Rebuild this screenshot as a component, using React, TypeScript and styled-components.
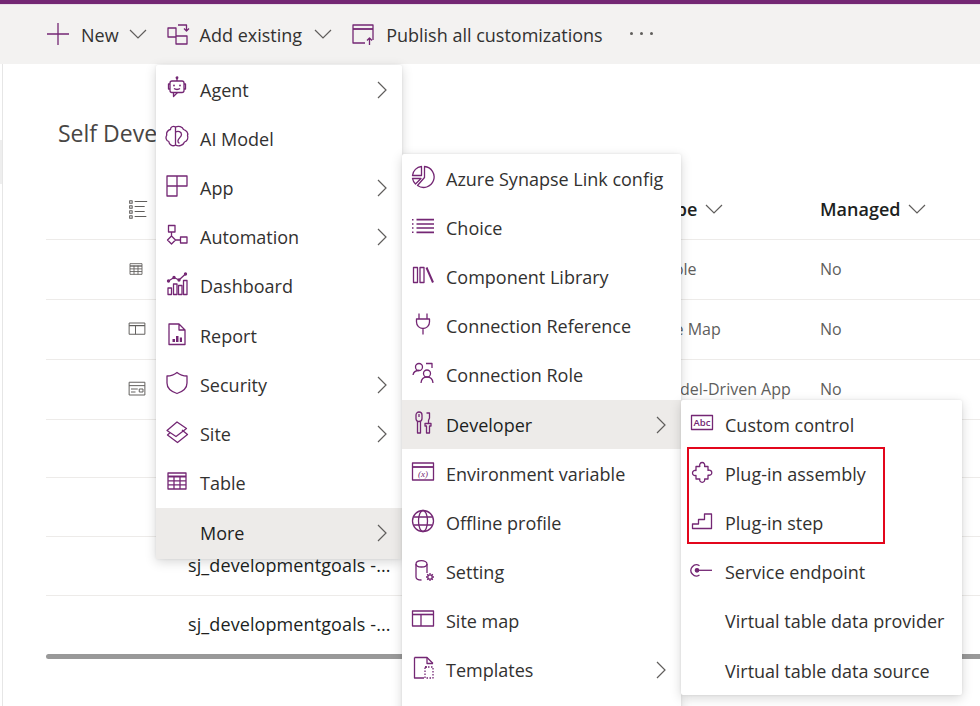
import React from 'react';
import styled, { createGlobalStyle } from 'styled-components';

const PURPLE = '#742774';
const FONT = '"Open Sans", "Noto Sans", "Liberation Sans", sans-serif';

const GlobalStyle = createGlobalStyle`
  html, body {
    margin: 0;
    padding: 0;
    background: #fff;
    font-family: ${FONT};
  }
`;

const Page = styled.div`
  position: relative;
  width: 980px;
  height: 706px;
  overflow: hidden;
  background: #fff;
`;

const TopBar = styled.div`
  height: 4px;
  background: ${PURPLE};
  border-bottom: 1px solid #e8dfe8;
`;

const CommandBar = styled.div`
  display: flex;
  align-items: center;
  height: 59px;
  padding-left: 46px;
  background: #f3f2f1;
  color: #323130;
  font-size: 18px;
`;

const CommandIcon = styled.span<{ $after: number }>`
  display: flex;
  margin-right: ${(p) => p.$after}px;
  margin-top: -1px;
`;

const CommandText = styled.span<{ $after: number }>`
  margin-right: ${(p) => p.$after}px;
  white-space: nowrap;
`;

const Dots = styled.span`
  display: flex;
  gap: 7px;
  margin-left: 27px;
  margin-top: -2px;
`;

const Dot = styled.i`
  width: 3px;
  height: 3px;
  border-radius: 50%;
  background: #605e5c;
`;

const Content = styled.main`
  margin-left: 2px;
  height: 642px;
  border-left: 1px solid #e6e6e6;
  padding-left: 43px;
`;

const SideTick = styled.div`
  position: absolute;
  left: 0;
  top: 140px;
  width: 2px;
  height: 44px;
  background: #eeeeee;
`;

const Title = styled.h1`
  margin: 0;
  height: 117px;
  padding-left: 12px;
  padding-top: 52px;
  box-sizing: border-box;
  font-size: 23px;
  line-height: 34px;
  font-weight: 400;
  color: #484644;
  white-space: nowrap;
`;

const Table = styled.div`
  display: flex;
  flex-direction: column;
`;

const Row = styled.div<{ $height: number }>`
  display: grid;
  grid-template-columns: 142px 468px 164px 1fr;
  align-items: center;
  height: ${(p) => p.$height}px;
  padding-bottom: 2px;
  box-sizing: border-box;
  border-bottom: 1px solid #edebe9;
  color: #605e5c;
  font-size: 16px;
`;

const LastRow = styled(Row)`
  border-bottom: none;
`;

const RowIcon = styled.span`
  display: flex;
  padding-left: 82px;
`;

const HeaderCell = styled.span`
  display: flex;
  align-items: center;
  gap: 8px;
  font-size: 18px;
  font-weight: 600;
  color: #201f1e;
`;

const NameCell = styled.span`
  font-size: 18px;
  letter-spacing: 0.1px;
  color: #201f1e;
  white-space: nowrap;
`;

const Scrollbar = styled.div`
  height: 5px;
  background: #999;
  border-radius: 3px 0 0 3px;
`;

const Menu = styled.div<{ $left: number; $top: number; $width: number }>`
  position: absolute;
  left: ${(p) => p.$left}px;
  top: ${(p) => p.$top}px;
  width: ${(p) => p.$width}px;
  background: #fff;
  border-radius: 2px;
  box-shadow: 0 3px 12px rgba(0, 0, 0, 0.16), 0 0 3px rgba(0, 0, 0, 0.08);
`;

const MenuRow = styled.div<{ $active?: boolean; $tall?: boolean }>`
  display: flex;
  align-items: center;
  height: ${(p) => (p.$tall ? 51 : 49.2)}px;
  padding-right: 15px;
  background: ${(p) => (p.$active ? '#edebe9' : 'transparent')};
  color: ${(p) => (p.$active ? '#201f1e' : '#323130')};
  font-size: 18px;
  white-space: nowrap;
`;

const MenuIcon = styled.span`
  display: flex;
  flex: none;
  justify-content: center;
  width: 42px;
  margin-right: 2px;
  margin-top: -4px;
`;

const MenuLabel = styled.span`
  flex: 1;
`;

const RedBox = styled.div`
  position: absolute;
  left: 687px;
  top: 447px;
  width: 198px;
  height: 97px;
  box-sizing: border-box;
  border: 2px solid #e3061c;
  pointer-events: none;
`;

type IconProps = { children: React.ReactNode; color?: string; size?: number };

const Icon = ({ children, color = PURPLE, size = 24 }: IconProps) => (
  <svg
    width={size}
    height={size}
    viewBox="0 0 24 24"
    fill="none"
    stroke={color}
    strokeWidth={1.3}
    strokeLinejoin="round"
  >
    {children}
  </svg>
);

const Chevron = () => (
  <svg width="10" height="18" viewBox="0 0 10 18" fill="none" stroke="#605e5c" strokeWidth="1.2">
    <path d="M1 1l8 8-8 8" />
  </svg>
);

const Caret = ({ color = '#605e5c' }: { color?: string }) => (
  <svg width="18" height="10" viewBox="0 0 18 10" fill="none" stroke={color} strokeWidth="1.2">
    <path d="M1 1l8 8 8-8" />
  </svg>
);

const icons: Record<string, React.ReactNode> = {
  agent: (
    <>
      <rect x="5" y="5" width="14" height="11.5" rx="2" />
      <path d="M12 2v3M5 8H3.5v5H5M19 8h1.5v5H19M8.5 16.5v4l4-4" />
      <circle cx="12" cy="1.8" r="0.8" fill={PURPLE} />
      <circle cx="9" cy="9.5" r="0.9" fill={PURPLE} stroke="none" />
      <circle cx="15" cy="9.5" r="0.9" fill={PURPLE} stroke="none" />
      <path d="M9 12.5c1.5 1.3 4.5 1.3 6 0" />
    </>
  ),
  brain: (
    <>
      <path d="M10.5 2C8 .5 5.5 2 5.5 4.5 3 5 1 7.5 1.8 10 .3 12.500 1 15.500 3.800 16.500 4 19.500 7.500 22 10.500 20z" />
      <path d="M10.500 2c3-1.500 7-.5 8 2.500 3 1 5 3.500 4 6 1 2.500 0 5.500-3 6.500-1 3-5.500 5-9 3" />
      <path d="M10.500 7c2.500-1.500 6-.5 6 2.500 0 2.500-3 3.500-3.500 6-.2 1.500.5 2.500 1.500 2.500" />
    </>
  ),
  app: <path d="M2 2h20v10H12v10H2zM12 2v10M2 12h10" />,
  automation: (
    <>
      <rect x="3.500" y="2.500" width="6.500" height="6.500" />
      <path d="M6.500 9v4M6.500 13l4 4-4 4-4-4zM10.500 17h5" />
      <rect x="15.500" y="14" width="6.500" height="6" />
    </>
  ),
  dashboard: (
    <>
      <rect x="3" y="16" width="3.500" height="6.500" />
      <rect x="8.500" y="12" width="3.500" height="10.500" />
      <rect x="13.500" y="13.500" width="3.500" height="9" />
      <rect x="18.500" y="8.500" width="3.500" height="14" />
      <path d="M3.500 9l5.500-3.500 5 2.500 6.500-6" />
      <circle cx="3.500" cy="9" r="1" fill={PURPLE} />
      <circle cx="9" cy="5.500" r="1" fill={PURPLE} />
      <circle cx="14" cy="8" r="1" fill={PURPLE} />
      <circle cx="20.500" cy="2" r="1" fill={PURPLE} />
    </>
  ),
  report: (
    <>
      <path d="M4 2h10l6 6v14.500H4zM14 2v6h6" />
      <path d="M7.500 17h2.500v3H7.500zM11 14h2.500v6H11zM14.800 15.500h2.200v4.500h-2.200z" fill={PURPLE} stroke="none" />
    </>
  ),
  shield: <path d="M12 1.500C9 4 5.500 5 2 5v7c0 5 4 8.500 10 10.500 6-2 10-5.500 10-10.500V5c-3.500 0-7-1-10-3.500z" />,
  site: (
    <>
      <path d="M2 10.500l10-8.500 9.500 6.500-10.500 8z" />
      <path d="M5 12.800L2.500 15l10 7.500L22.500 14.500 17 10" />
    </>
  ),
  table: (
    <>
      <rect x="3" y="4" width="18" height="16" />
      <path d="M3 7.500h18" strokeWidth="2" />
      <path d="M3 11.800h18M3 15.800h18M9 7v13M15 7v13" />
    </>
  ),
  pie: (
    <>
      <path d="M13.500 1.500A10.500 10.500 0 1 1 6.500 20.500L13.500 12.500z" />
      <path d="M10.500 1.500A10 10 0 0 0 1.500 10.500H10.500z" />
      <path d="M1.500 13.500H10L4.500 19A10 10 0 0 1 1.500 13.500z" />
    </>
  ),
  list: (
    <>
      <path d="M5.500 5.700H23M5.500 10H23M5.500 14H23M5.500 18.300H23" strokeWidth="1.700" />
      <path d="M1 5.700h1.500M1 10h1.500M1 14h1.500M1 18.300h1.500" strokeWidth="1.500" />
    </>
  ),
  library: (
    <>
      <rect x="2.500" y="4.500" width="4" height="15" />
      <rect x="9" y="4.500" width="4" height="15" />
      <path d="M15.500 4.500l6.500 15" strokeWidth="2" />
    </>
  ),
  plug: <path d="M8 1.500v5.500M16 1.500v5.500M5.500 7h13v3a6.500 6.500 0 0 1-13 0zM12 16.500v6" />,
  people: (
    <>
      <circle cx="8" cy="6" r="3.500" />
      <path d="M2 14c.500-3 3-4.500 6-4.500" />
      <path d="M15 2.500h6v4.500" />
      <circle cx="16" cy="12.500" r="3.500" />
      <path d="M10 22c.300-3.500 2.500-6 6-6s5.700 2.500 6 6" />
    </>
  ),
  tools: (
    <>
      <path d="M5 4a3 3 0 0 1 6 0v3.500a3 3 0 0 1-6 0z" />
      <path d="M8 3v3M6.500 10.500V22h3V10.500" />
      <path d="M15.500 2h3v5l-1 2.500v3M14 12.500h6v2.500h-1.500v7h-3v-7H14z" />
    </>
  ),
  envvar: (
    <>
      <rect x="1.500" y="3" width="21" height="17" />
      <path d="M1.500 7h21" strokeWidth="1.800" />
      <text x="12" y="17" fontSize="9" fontStyle="italic" fontFamily="Liberation Serif, serif" textAnchor="middle" fill={PURPLE} stroke="none">(x)</text>
    </>
  ),
  globe: (
    <>
      <circle cx="12" cy="12" r="10.500" />
      <ellipse cx="12" cy="12" rx="4.500" ry="10.500" />
      <path d="M2.500 8h19M2.500 16h19" />
    </>
  ),
  setting: (
    <>
      <path d="M16 15V6c0-4.500-11-4.500-11 0v13c0 2 2.500 3 5.500 3" />
      <path d="M5 6c0 4 11 4 11 0" />
      <circle cx="19" cy="19" r="2.200" />
      <path d="M19 15v1.500M19 21.500V23M15 19h1.500M21.500 19H23M16.200 16.200l1 1M20.800 20.800l1 1M21.800 16.200l-1 1M17.200 20.800l-1 1" />
    </>
  ),
  sitemap: (
    <>
      <rect x="1.500" y="4" width="21" height="15" />
      <path d="M1.500 7.500h21" strokeWidth="1.600" />
      <path d="M10 7.500V19" />
    </>
  ),
  template: (
    <>
      <path d="M14 11H16M3.500 1.500H16l6 6M3.500 1.500v20.500h9.500" />
      <path d="M16 1.500v6h6" />
      <path d="M14 11h8v11h-8z" strokeDasharray="1.500 1.500" />
    </>
  ),
  abc: (
    <>
      <rect x="1.500" y="4.500" width="21" height="14" />
      <text x="12" y="15" fontSize="9.500" fontWeight="600" fontFamily="Open Sans, sans-serif" textAnchor="middle" fill={PURPLE} stroke="none">Abc</text>
    </>
  ),
  puzzle: (
    <path d="M6 6.500h3.800c-.6-2.600.7-4 2.400-4s3 1.400 2.400 4H18v3.900c2.300-.7 3.800.6 3.800 2.300s-1.500 3-3.800 2.400v3.900h-3.400c.5 2-.7 3.300-2.400 3.300s-2.900-1.300-2.400-3.300H6v-3.600c-2.200.6-3.500-.7-3.500-2.400s1.300-3 3.500-2.400z" />
  ),
  stairs: <path d="M2.500 19.500h19V5h-7v5.500h-6v4.500h-6z" />,
  endpoint: (
    <>
      <path d="M9.500 7.800A5.500 5.500 0 1 0 9.500 17" />
      <circle cx="7" cy="12.300" r="1.700" fill={PURPLE} />
      <path d="M8.500 12.300H22" />
    </>
  ),
};

type Item = { label: string; icon?: string; more?: boolean; active?: boolean; tall?: boolean };

const firstMenu: Item[] = [
  { label: 'Agent', icon: 'agent', more: true },
  { label: 'AI Model', icon: 'brain' },
  { label: 'App', icon: 'app', more: true },
  { label: 'Automation', icon: 'automation', more: true },
  { label: 'Dashboard', icon: 'dashboard' },
  { label: 'Report', icon: 'report' },
  { label: 'Security', icon: 'shield', more: true },
  { label: 'Site', icon: 'site', more: true },
  { label: 'Table', icon: 'table' },
  { label: 'More', more: true, active: true, tall: true },
];

const secondMenu: Item[] = [
  { label: 'Azure Synapse Link config', icon: 'pie' },
  { label: 'Choice', icon: 'list' },
  { label: 'Component Library', icon: 'library' },
  { label: 'Connection Reference', icon: 'plug' },
  { label: 'Connection Role', icon: 'people' },
  { label: 'Developer', icon: 'tools', more: true, active: true },
  { label: 'Environment variable', icon: 'envvar' },
  { label: 'Offline profile', icon: 'globe' },
  { label: 'Setting', icon: 'setting' },
  { label: 'Site map', icon: 'sitemap' },
  { label: 'Templates', icon: 'template', more: true },
  { label: '' },
];

const thirdMenu: Item[] = [
  { label: 'Custom control', icon: 'abc' },
  { label: 'Plug-in assembly', icon: 'puzzle' },
  { label: 'Plug-in step', icon: 'stairs' },
  { label: 'Service endpoint', icon: 'endpoint' },
  { label: 'Virtual table data provider' },
  { label: 'Virtual table data source' },
];

const FlyoutMenu = ({ items, left, top, width }: { items: Item[]; left: number; top: number; width: number }) => (
  <Menu $left={left} $top={top} $width={width}>
    {items.map((item) => (
      <MenuRow key={item.label} $active={item.active} $tall={item.tall}>
        <MenuIcon>{item.icon && <Icon>{icons[item.icon]}</Icon>}</MenuIcon>
        <MenuLabel>{item.label}</MenuLabel>
        {item.more && <Chevron />}
      </MenuRow>
    ))}
  </Menu>
);

const GREY = '#605e5c';

export default function App() {
  return (
    <Page>
      <GlobalStyle />
      <TopBar />
      <CommandBar>
        <CommandIcon $after={11}>
          <Icon>
            <path d="M12 1v22M1 12h22" />
          </Icon>
        </CommandIcon>
        <CommandText $after={10}>New</CommandText>
        <CommandIcon $after={19}>
          <Caret />
        </CommandIcon>
        <CommandIcon $after={10}>
          <Icon>
            <path d="M10 6H2v9h8zM10 14h11v8H10zM12 3h8.500v6M18 6.500l2.500 2.500 2.500-2.500" />
          </Icon>
        </CommandIcon>
        <CommandText $after={12}>Add existing</CommandText>
        <CommandIcon $after={19}>
          <Caret />
        </CommandIcon>
        <CommandIcon $after={11}>
          <Icon>
            <path d="M14 21H2V3h20v15" />
            <path d="M2 7h20" strokeWidth="1.800" />
            <path d="M18.500 23v-7M16 18.500l2.500-2.500 2.500 2.500" />
          </Icon>
        </CommandIcon>
        <CommandText $after={0}>Publish all customizations</CommandText>
        <Dots>
          <Dot />
          <Dot />
          <Dot />
        </Dots>
      </CommandBar>
      <SideTick />
      <Content>
        <Title>Self Deve</Title>
        <Table>
          <Row $height={59}>
            <RowIcon>
              <Icon color={GREY} size={20}>
                <path d="M8 3h15M8 9h12M8 15h12M8 21h14M2 2h3v3H2zM2 8h3v3H2zM2 14h3v3H2zM2 20h3v3H2z" />
              </Icon>
            </RowIcon>
            <span />
            <HeaderCell>
              Type <Caret />
            </HeaderCell>
            <HeaderCell>
              Managed <Caret />
            </HeaderCell>
          </Row>
          <Row $height={60}>
            <RowIcon>
              <Icon color={GREY} size={16}>{icons.table}</Icon>
            </RowIcon>
            <span />
            <span>Table</span>
            <span>No</span>
          </Row>
          <Row $height={60}>
            <RowIcon>
              <Icon color={GREY} size={18}>{icons.sitemap}</Icon>
            </RowIcon>
            <span />
            <span>Site Map</span>
            <span>No</span>
          </Row>
          <Row $height={60}>
            <RowIcon>
              <Icon color={GREY} size={18}>
                <rect x="1.500" y="3" width="21" height="17" />
                <path d="M1.500 7.500h21M4 12h9M4 16h6M15 12h5v4h-5z" />
              </Icon>
            </RowIcon>
            <span />
            <span>Model-Driven App</span>
            <span>No</span>
          </Row>
          <Row $height={58} />
          <Row $height={59} />
          <Row $height={59}>
            <span />
            <NameCell>sj_developmentgoals -...</NameCell>
          </Row>
          <LastRow $height={58}>
            <span />
            <NameCell>sj_developmentgoals -...</NameCell>
          </LastRow>
          <Scrollbar />
        </Table>
      </Content>
      <FlyoutMenu items={firstMenu} left={156} top={65} width={246} />
      <FlyoutMenu items={secondMenu} left={402} top={154} width={279} />
      <FlyoutMenu items={thirdMenu} left={681} top={400} width={281} />
      <RedBox />
    </Page>
  );
}
